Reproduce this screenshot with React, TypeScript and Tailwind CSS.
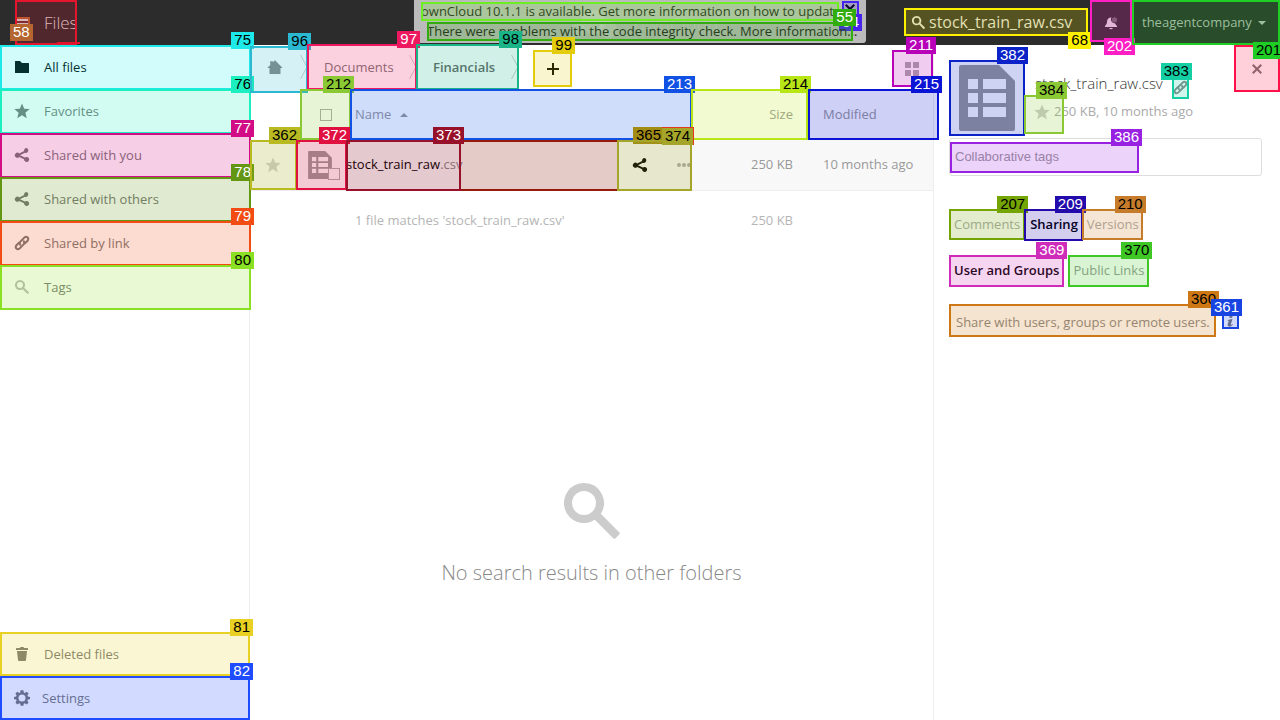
import type { ReactNode } from "react";

type MarkProps = {
  id?: string;
  color: string;
  box?: string;
  tag?: string;
  light?: boolean;
};

/* Numbered outline laid over an interactive element. */
function Mark({ id, color, box = "inset-0", tag = "-right-[5px] -top-[15px]", light = false }: MarkProps) {
  return (
    <span className={`pointer-events-none absolute z-10 border-2 border-current bg-current/20 ${box} ${color}`}>
      {id && (
        <span className={`absolute z-20 bg-current px-[3px] pb-[2px] font-['Liberation_Sans',sans-serif] text-[15px] leading-[15px] font-normal ${tag}`}>
          <span className={light ? "text-white" : "text-black"}>{id}</span>
        </span>
      )}
    </span>
  );
}

function Svg({ children, className, box = "0 0 16 16" }: { children: ReactNode; className: string; box?: string }) {
  return (
    <svg viewBox={box} className={`shrink-0 ${className}`} fill="currentColor" aria-hidden="true">
      {children}
    </svg>
  );
}

const Folder = ({ className = "size-4" }) => (
  <Svg className={className}>
    <path d="M1.5 2Q1 2 1 2.5v11q0 .5.5.5h13q.5 0 .5-.5v-9q0-.5-.5-.5H8L6 2z" />
  </Svg>
);
const Star = ({ className = "size-4" }) => (
  <Svg className={className}>
    <path d="M8 .5 10.2 5.7l5.5.4-4.3 3.6 1.4 5.5L8 12.2l-4.800 3 1.400-5.500L.3 6.100l5.500-.4z" />
  </Svg>
);
const Share = ({ className = "size-4" }) => (
  <Svg className={className}>
    <path d="M12.5 1a2.5 2.5 0 0 0-2.4 3L5.2 6.500a2.500 2.500 0 1 0 0 3.400l4.900 2.400a2.500 2.500 0 1 0 .8-1.700L6 8.200l4.900-2.400A2.500 2.500 0 1 0 12.500 1z" />
  </Svg>
);
const Chain = ({ className = "size-4" }) => (
  <Svg className={className}>
    <g fill="none" stroke="currentColor" strokeWidth="2" strokeLinecap="round">
      <path d="M6.300 9.800c-1-1.300-.6-2.500.3-3.400l3.600-3.600c2.700-2.300 5.300.3 3.300 3L11 8.400" />
      <path d="M9.700 6.200c1 1.300.6 2.500-.3 3.400l-3.600 3.600c-2.700 2.300-5.300-.3-3.300-3L5 7.600" />
    </g>
  </Svg>
);
const Search = ({ className = "size-4" }) => (
  <Svg className={className}>
    <path fillRule="evenodd" d="M6 1a5 5 0 1 0 2.700 9.200l4.600 4.600q.3.300.6 0l.9-.9q.3-.3 0-.6l-4.600-4.600A5 5 0 0 0 6 1m0 2a3 3 0 1 1 0 6 3 3 0 0 1 0-6" />
  </Svg>
);
const Trash = () => (
  <Svg className="size-4">
    <path d="M6.500 1 6 2H2.500Q2 2 2 3v1h12V3q0-1-.5-1H10l-.5-1zM3 5l1 9q.1 1 1 1h6q.9 0 1-1l1-9z" />
  </Svg>
);
const Gear = () => (
  <Svg className="size-4">
    <path fillRule="evenodd" d="M6.600.3h2.800l.4 2.100 1.100.5 1.800-1.200 1.900 1.900-1.200 1.800.5 1.100 2.100.4v2.300l-2.100.4-.5 1.100 1.200 1.800-1.900 1.900-1.800-1.200-1.100.5-.4 2.100H6.600l-.4-2.100-1.100-.5-1.800 1.200-1.900-1.900 1.200-1.800-.5-1.100L0 9.200V6.900l2.100-.4.5-1.100-1.200-1.800 1.900-1.900 1.800 1.200 1.100-.5zM8 4.500a3.500 3.500 0 1 0 0 7 3.500 3.500 0 0 0 0-7" />
  </Svg>
);
const Home = () => (
  <Svg className="size-4">
    <path d="m8 .2-2.200 2V1.300H3.200V5L.3 8H2.500v6h11V8h2.200z" />
  </Svg>
);
const Sheet = ({ className }: { className: string }) => (
  <Svg className={className} box="0 0 56 66">
    <path fillRule="evenodd" d="M2 0h38l16 16v48q0 2-2 2H2q-2 0-2-2V2q0-2 2-2M9 14v10h10V14zm15 0v10h23V14zM9 28v10h10V28zm15 0v10h23V28zM9 42v10h10V42zm15 0v10h23V42z" />
  </Svg>
);
const Cross = ({ className = "size-4" }) => (
  <Svg className={className}>
    <path d="m4.500 3 3.500 3.500L11.500 3 13 4.500 9.500 8l3.500 3.500-1.500 1.500L8 9.500 4.500 13 3 11.500 6.500 8 3 4.500z" />
  </Svg>
);
const Chevron = () => (
  <svg viewBox="0 0 8 26" className="absolute top-[9px] right-0 h-[26px] w-2" fill="none" stroke="#ccc" aria-hidden="true">
    <path d="M.5 1 7 13 .5 25" />
  </svg>
);

const navItems = [
  { name: "All files", icon: <Folder />, id: "75", color: "text-[#1de9e9]", tone: "text-black" },
  { name: "Favorites", icon: <Star />, id: "76", color: "text-[#1df0c0]", tone: "text-[#777]" },
  { name: "Shared with you", icon: <Share />, id: "77", color: "text-[#d10c84]", tone: "text-[#777]", light: true },
  { name: "Shared with others", icon: <Share />, id: "78", color: "text-[#639613]", tone: "text-[#777]", light: true },
  { name: "Shared by link", icon: <Chain />, id: "79", color: "text-[#f24c14]", tone: "text-[#777]", light: true },
  { name: "Tags", icon: <Search className="size-4 opacity-50" />, id: "80", color: "text-[#8ae022]", tone: "text-[#777]" },
];

function Header() {
  return (
    <header className="relative z-30 flex h-[45px] shrink-0 items-center bg-[#2c2c2c]">
      <a href="#apps" className="relative ml-[15px] flex h-[45px] w-[62px] items-center pl-[29px] text-[17px] font-light text-[#ddd]">
        Files
        <Mark color="text-[#e3162e]" />
        <span className="absolute top-[42px] left-[42px] h-[2px] w-[23px] bg-[#e3162e]" />
        <span className="absolute top-[17px] left-0 flex h-[10px] w-[15px] flex-col gap-[2px] border-2 border-[#b5652f] bg-[#63362f]">
          <span className="h-[2px] bg-[#ddd]" />
          <span className="h-[2px] bg-[#ddd]" />
        </span>
        <span className="absolute top-6 -left-[5px] z-20 bg-[#b5652f] px-[3px] pb-[2px] font-['Liberation_Sans',sans-serif] text-[15px] leading-[15px] font-normal text-white">58</span>
      </a>

      <div className="absolute top-0 left-1/2 h-[43px] w-[452px] -translate-x-1/2 rounded-b-[3px] bg-[#bbb] text-[13px] text-[#222]">
        <div className="absolute top-[9px] left-[156px] flex items-center gap-4 text-lg text-white/15" aria-hidden="true">
          <Svg className="h-[30px] w-12" box="0 0 48 30">
            <circle cx="8" cy="21" r="7" />
            <circle cx="23" cy="13" r="12" />
            <circle cx="38" cy="20" r="9" />
          </Svg>
          ownCloud
        </div>
        <a href="#update" className="absolute top-[2px] left-[7px] h-[19px] w-[418px] leading-[19px] whitespace-nowrap">
          ownCloud 10.1.1 is available. Get more information on how to update
          <Mark color="text-[#6cee22]" />
        </a>
        <button aria-label="Dismiss" className="absolute top-px left-[428px] h-[29px] w-[17px] text-black">
          <Cross className="absolute top-0 left-0 size-4" />
          <Mark id="54" color="text-[#4624ee]" tag="-right-[5px] top-[11px]" light />
        </button>
        <a href="#integrity" className="absolute top-[22px] left-[13px] z-10 h-[19px] w-[426px] leading-[18px] whitespace-nowrap">
          There were problems with the code integrity check. More information…
          <Mark id="55" color="text-[#31ad0d]" light />
        </a>
      </div>

      <label className="relative ml-auto flex h-7 w-[184px] -translate-y-px items-center text-[#ddd]">
        <Search className="mt-px ml-[7px] size-[15px]" />
        <input type="text" aria-label="Search" defaultValue="stock_train_raw.csv" className="ml-[3px] w-[156px] bg-transparent text-base outline-none" />
        <Mark id="68" color="text-[#fff000]" tag="-right-[5px] top-[22px]" />
      </label>
      <button aria-label="Notifications" className="relative ml-[2px] flex h-[42px] w-[42px] items-center justify-center self-start pt-1 text-[#ddd]">
        <Svg className="size-[14px]" box="0 0 14 14">
          <path d="M6.500 1.500Q3 2 3 6 3 8.500 1 10v1h12v-1q-1.500-1.200-1.800-2.500Q7.300 7 6.900 3.500 6.900 2 7.500 1.500zM5 12q2 2.600 4 0z" />
          <circle cx="10.500" cy="3.800" r="2.600" opacity=".35" />
        </Svg>
        <Mark id="202" color="text-[#ff1fc4]" tag="-right-[5px] top-[36px]" light />
      </button>
      <button className="relative flex h-[45px] w-[148px] items-center gap-[6px] pl-[10px] text-[13px] text-[#bbb]">
        theagentcompany
        <Svg className="h-1 w-2" box="0 0 8 4"><path d="M0 0h8L4 4z" /></Svg>
        <Mark color="text-[#1fce25]" />
      </button>
    </header>
  );
}

function Sidebar() {
  return (
    <nav className="flex w-[250px] shrink-0 flex-col border-r border-[#eee] text-[13px]">
      {navItems.map((item) => (
        <a key={item.id} href="#nav" className={`relative flex h-11 items-center gap-[14px] pl-[14px] ${item.tone}`}>
          {item.icon}
          <span className="pt-[2px]">{item.name}</span>
          <Mark id={item.id} color={item.color} box="-right-[2px] top-0 -bottom-px left-0" light={item.light} />
        </a>
      ))}
      <a href="#trash" className="relative mt-auto flex h-11 items-center gap-[14px] pl-[14px] text-[#777]">
        <Trash />
        <span className="pt-[2px]">Deleted files</span>
        <Mark id="81" color="text-[#e8d122]" box="-right-px inset-y-0 left-0" />
      </a>
      <button className="relative flex h-11 items-center gap-3 pl-[14px] text-[#777]">
        <Gear />
        <span className="pt-[2px]">Settings</span>
        <Mark id="82" color="text-[#1f4cff]" box="-right-px inset-y-0 left-0" light />
      </button>
    </nav>
  );
}

function Breadcrumb() {
  return (
    <div className="flex h-[45px] shrink-0 items-start text-[13px]">
      <a href="#home" aria-label="Home" className="relative flex h-[45px] w-[58px] items-center pl-[17px] text-[#888]">
        <Home />
        <Chevron />
        <Mark id="96" color="text-[#2bb9d2]" box="-bottom-[3px] top-px inset-x-0" />
      </a>
      <a href="#documents" className="relative flex h-[45px] w-[109px] items-center pl-4 text-[#777]">
        Documents
        <Chevron />
        <Mark id="97" color="text-[#ee1860]" box="-top-px bottom-0 -left-px right-0" light />
      </a>
      <a href="#financials" className="relative flex h-[45px] w-[102px] items-center pl-4 font-semibold text-[#666]">
        Financials
        <Chevron />
        <Mark id="98" color="text-[#19b588]" box="-top-px bottom-0 -left-px right-0" />
      </a>
      <button aria-label="New" className="relative mt-[5px] ml-[14px] flex h-[37px] w-[39px] items-center justify-center text-black">
        <Svg className="size-3" box="0 0 12 12"><path d="M5 0h2v5h5v2H7v5H5V7H0V5h5z" /></Svg>
        <Mark id="99" color="text-[#e2cc0c]" />
      </button>
      <button aria-label="Grid view" className="relative mt-[5px] ml-auto flex h-[37px] w-[41px] items-center justify-center pr-px text-[#aaa]">
        <Svg className="size-[14px]" box="0 0 14 14"><path d="M0 0h6v6H0zm8 0h6v6H8zM0 8h6v6H0zm8 0h6v6H8z" /></Svg>
        <Mark id="211" color="text-[#b800b8]" light />
      </button>
    </div>
  );
}

const check = "block size-3 appearance-none border border-[#aaa]";

function FileTable() {
  return (
    <table className="w-full table-fixed border-collapse text-left text-[13px] text-[#999]">
      <colgroup>
        <col className="w-[46px]" />
        <col className="w-[50px]" />
        <col />
        <col className="w-[117px]" />
        <col className="w-[125px]" />
      </colgroup>
      <thead>
        <tr className="h-[50px]">
          <td />
          <th className="relative p-0 pl-6 font-normal">
            <input type="checkbox" aria-label="Select all" className={check} />
            <Mark id="212" color="text-[#8bc934]" box="-top-px bottom-0 left-1 -right-[5px]" />
          </th>
          <th className="relative p-0 pl-[9px] font-normal">
            <button className="flex items-center gap-[9px]">
              Name
              <Svg className="h-1 w-2" box="0 0 8 4"><path d="M0 4h8L4 0z" /></Svg>
            </button>
            <Mark id="213" color="text-[#1152e4]" box="-top-px bottom-0 left-1 -right-px" light />
          </th>
          <th className="relative p-0 pr-[15px] text-right font-normal">
            Size
            <Mark id="214" color="text-[#b8e516]" box="-top-px bottom-0 inset-x-0" />
          </th>
          <th className="relative p-0 pl-[15px] font-normal">
            Modified
            <Mark id="215" color="text-[#0a14d4]" box="-top-px bottom-0 left-0 -right-[6px]" light />
          </th>
        </tr>
      </thead>
      <tbody>
        <tr className="h-[50px] border-b border-[#eee] bg-[#f8f8f8]">
          <td className="relative p-0 pl-[15px] text-[#ccc]">
            <Star />
            <Mark id="362" color="text-[#b9ba22]" box="inset-y-0 left-0 -right-px" />
          </td>
          <td className="relative p-0 pl-3 text-[#999]">
            <Sheet className="h-7 w-6" />
            <input type="checkbox" aria-label="Select stock_train_raw.csv" className={`${check} absolute top-7 left-8 bg-[#f8f8f8]`} />
            <Mark id="372" color="text-[#e01040]" box="inset-y-0 left-0 -right-px" light />
          </td>
          <td className="relative p-0">
            <div className="flex h-[50px] items-center">
              <a href="#file" className="relative flex h-[50px] w-[115px] items-center whitespace-nowrap text-black">
                <span>stock_train_raw<span className="text-[#888]">.csv</span></span>
                <Mark id="373" color="text-[#98112a]" box="inset-x-0 top-0 -bottom-px" light />
              </a>
              <div className="relative ml-auto flex h-[50px] w-[74px] items-center pl-[15px]">
                <button aria-label="Share" className="text-black"><Share /></button>
                <button aria-label="More" className="ml-[29px] text-[#aaa]">
                  <Svg className="h-1 w-[14px]" box="0 0 14 4">
                    <circle cx="2" cy="2" r="2" /><circle cx="7" cy="2" r="2" /><circle cx="12" cy="2" r="2" />
                  </Svg>
                </button>
                <Mark id="365" color="text-[#a28c14]" box="top-0 -bottom-px left-0 -right-px bg-transparent" tag="right-[26px] -top-[15px]" />
                <Mark id="374" color="text-[#a5a52a]" box="top-0 -bottom-px left-0 -right-px" tag="-right-[4px] -top-[15px] border-t border-r border-[#e63a20]" />
              </div>
            </div>
            <span className="pointer-events-none absolute top-0 right-[74px] -bottom-px left-[115px] border-y-2 border-[#951a0b] bg-[#951a0b]/20" />
          </td>
          <td className="p-0 pr-[15px] text-right">250 KB</td>
          <td className="p-0 pl-[15px]">10 months ago</td>
        </tr>
      </tbody>
      <tfoot>
        <tr className="h-[60px] text-[#b5b5b5]">
          <td />
          <td />
          <td className="p-0 pl-[9px]">1 file matches 'stock_train_raw.csv'</td>
          <td className="p-0 pr-[15px] text-right">250 KB</td>
          <td />
        </tr>
      </tfoot>
    </table>
  );
}

function Details() {
  return (
    <aside className="flex w-[347px] shrink-0 flex-col border-l border-[#eee] pl-[15px] text-[13px] text-[#999]">
      <div className="flex items-start">
        <div className="relative mt-[15px] flex size-[76px] items-center justify-center text-[#999]">
          <Sheet className="h-[66px] w-14" />
          <Mark id="382" color="text-[#0a22c8]" light />
        </div>
        <div className="flex flex-col">
          <div className="mt-[31px] flex h-[23px] items-center gap-[9px] pl-[10px] text-[#333]">
            <h3 className="pb-2 text-[15px] font-light whitespace-nowrap">stock_train_raw.csv</h3>
            <a href="#link" aria-label="Copy link" className="relative flex h-[23px] w-[17px] items-center justify-center text-[#888]">
              <Chain className="size-[15px]" />
              <Mark id="383" color="text-[#14cfa4]" />
            </a>
          </div>
          <div className="relative -mt-1 flex h-[39px] items-center gap-1 pb-[6px] pl-[9px] text-[#aaa]">
            <button aria-label="Favorite" className="text-[#ccc]"><Star /></button>
            <span>250 KB, 10 months ago</span>
            <Mark id="384" color="text-[#8bc934]" box="inset-y-0 -left-px w-[40px]" />
          </div>
        </div>
        <button aria-label="Close" className="relative ml-auto flex h-[47px] w-[46px] items-center justify-center text-[#777]">
          <Cross />
          <Mark id="201" color="text-[#ff1048]" tag="-right-[6px] -top-[5px] text-[#1fce25]" />
        </button>
      </div>
      <div className="mt-[2px] mr-[18px] flex h-[38px] items-center rounded-[3px] border border-[#ddd]">
        <div className="relative h-[31px] w-[189px]">
          <input aria-label="Collaborative tags" placeholder="Collaborative tags" className="h-full w-full bg-transparent pb-[2px] pl-[5px] font-['Liberation_Sans',sans-serif] text-[13px] outline-none placeholder:text-[#999]" />
          <Mark id="386" color="text-[#9922e2]" light />
        </div>
      </div>
      <div className="mt-[33px] flex h-[31px]">
        <button className="relative px-[5px] text-[#aaa]">Comments<Mark id="207" color="text-[#74a505]" /></button>
        <button className="relative px-[5px] font-semibold text-black">Sharing<Mark id="209" color="text-[#230aaa]" box="-left-px -bottom-px top-0 right-0" light /></button>
        <button className="relative px-1 text-[#aaa]">Versions<Mark id="210" color="text-[#c67c2a]" box="inset-y-0 right-0 -left-px" /></button>
      </div>
      <div className="mt-[15px] flex h-8 gap-1">
        <button className="relative px-[5px] font-semibold text-black">User and Groups<Mark id="369" color="text-[#d02cba]" light /></button>
        <button className="relative px-[5px] text-[#999]">Public Links<Mark id="370" color="text-[#3ec725]" /></button>
      </div>
      <div className="mt-[17px] flex items-center gap-[6px]">
        <div className="relative h-[33px] w-[267px]">
          <input aria-label="Share with users" placeholder="Share with users, groups or remote users." className="h-full w-full bg-transparent pt-[3px] pl-[7px] outline-none placeholder:text-[#888]" />
          <Mark id="360" color="text-[#cd7814]" />
        </div>
        <button aria-label="Info" className="relative h-[17px] w-[17px] text-[#777]">
          <Svg className="mx-auto size-[13px]">
            <path d="M8.500 1a2 2 0 1 1 0 4 2 2 0 0 1 0-4M4 8.500C5.500 7 7.500 6 10.500 6L8.300 13q-.2 1 2.700-.6l-.4 1.200Q8 16 6 15.500q-2-.5-1.500-2.500l1.300-4.500z" />
          </Svg>
          <Mark id="361" color="text-[#1844e2]" light />
        </button>
      </div>
    </aside>
  );
}

export default function App() {
  return (
    <div className="flex min-h-screen flex-col overflow-hidden bg-white font-['Open_Sans',sans-serif]">
      <Header />
      <div className="relative z-40 flex flex-1">
        <Sidebar />
        <main className="flex min-w-0 flex-1 flex-col">
          <Breadcrumb />
          <FileTable />
          <div className="mt-[228px] flex flex-col items-center text-[#888]">
            <Search className="size-16 text-[#ccc]" />
            <h2 className="mt-4 text-xl font-light">No search results in other folders</h2>
          </div>
        </main>
        <Details />
      </div>
    </div>
  );
}
